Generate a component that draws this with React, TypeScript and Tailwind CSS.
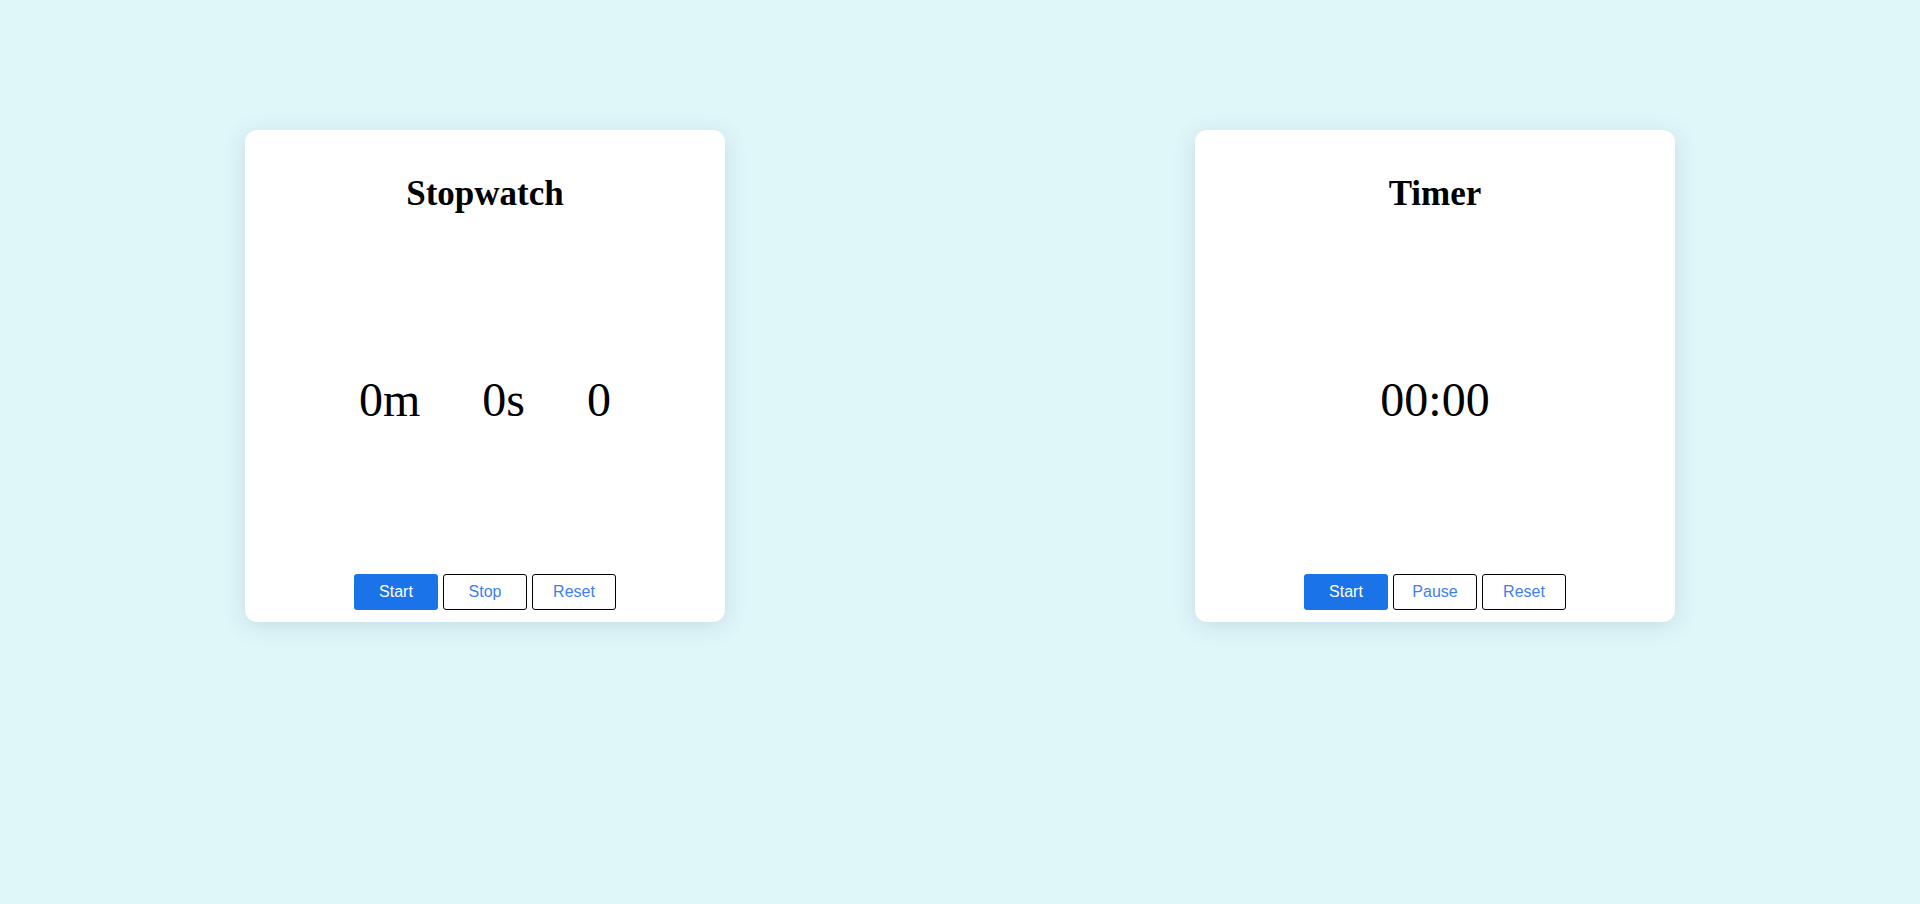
import { useState, useEffect, useRef } from 'react';

const serif = "font-['Liberation_Serif','Times_New_Roman',serif]";
const sans = "font-['Liberation_Sans',Arial,sans-serif]";

function Card({ title, children, buttons }: { title: string; children: React.ReactNode; buttons: { label: string; primary?: boolean; onClick: () => void }[] }) {
  return (
    <div className="w-[480px] h-[492px] bg-white rounded-xl shadow-[0_4px_24px_rgba(0,40,60,0.13)] flex flex-col items-center text-black">
      <h1 className={`${serif} text-[35px] font-bold leading-normal mt-[38px]`}>{title}</h1>
      <div className="flex-1 flex items-center justify-center pt-[5px]">{children}</div>
      <div className={`${sans} flex gap-[5px] mb-[12px]`}>
        {buttons.map((b) => (
          <button
            key={b.label}
            onClick={b.onClick}
            className={
              b.primary
                ? 'w-[84px] h-[36px] rounded-[3px] bg-[#1a73e8] text-white text-base'
                : 'w-[84px] h-[36px] rounded-[3px] bg-white border border-black text-[#3d7ef0] text-base'
            }
          >
            {b.label}
          </button>
        ))}
      </div>
    </div>
  );
}

export default function App() {
  const [ms, setMs] = useState(0);
  const [running, setRunning] = useState(false);
  const [secs, setSecs] = useState(0);
  const [timerOn, setTimerOn] = useState(false);
  const ref = useRef<number | null>(null);

  useEffect(() => {
    if (!running) return;
    const id = window.setInterval(() => setMs((m) => m + 10), 10);
    return () => window.clearInterval(id);
  }, [running]);

  useEffect(() => {
    if (!timerOn) return;
    ref.current = window.setInterval(() => setSecs((s) => (s > 0 ? s - 1 : 0)), 1000);
    return () => {
      if (ref.current) window.clearInterval(ref.current);
    };
  }, [timerOn]);

  const m = Math.floor(ms / 60000);
  const s = Math.floor((ms % 60000) / 1000);
  const cs = Math.floor((ms % 1000) / 10);
  const pad = (n: number) => String(n).padStart(2, '0');

  return (
    <div className="min-h-[904px] w-full bg-[#e0f7fa] flex justify-center gap-[470px] pt-[130px]">
      <Card
        title="Stopwatch"
        buttons={[
          { label: 'Start', primary: true, onClick: () => setRunning(true) },
          { label: 'Stop', onClick: () => setRunning(false) },
          { label: 'Reset', onClick: () => { setRunning(false); setMs(0); } },
        ]}
      >
        <div className={`${serif} text-[48px] leading-normal flex gap-[62px]`}>
          <span>{m}m</span>
          <span>{s}s</span>
          <span>{cs}</span>
        </div>
      </Card>
      <Card
        title="Timer"
        buttons={[
          { label: 'Start', primary: true, onClick: () => setTimerOn(true) },
          { label: 'Pause', onClick: () => setTimerOn(false) },
          { label: 'Reset', onClick: () => { setTimerOn(false); setSecs(0); } },
        ]}
      >
        <div className={`${serif} text-[48px] leading-normal`}>
          {pad(Math.floor(secs / 60))}:{pad(secs % 60)}
        </div>
      </Card>
    </div>
  );
}
